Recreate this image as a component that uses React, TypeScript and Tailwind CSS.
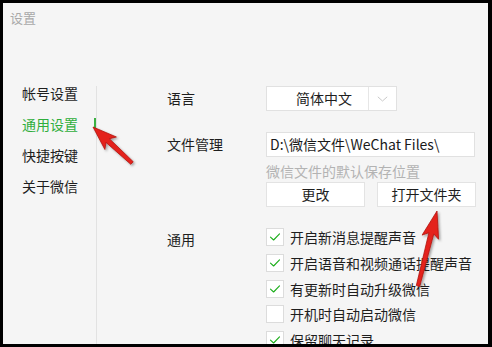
import React from "react";

type P = [number, number];

function arrowPoints(tip: P, tail: P, shaftTail: number, shaftHead: number, headLen: number, headW: number): string {
  const dx = tip[0] - tail[0];
  const dy = tip[1] - tail[1];
  const len = Math.hypot(dx, dy);
  const ux = dx / len;
  const uy = dy / len;
  const nx = -uy;
  const ny = ux;
  const base: P = [tip[0] - ux * headLen, tip[1] - uy * headLen];
  const join: P = [base[0] + ux * 4, base[1] + uy * 4];
  const pts: P[] = [
    [tail[0] + nx * shaftTail / 2, tail[1] + ny * shaftTail / 2],
    [join[0] + nx * shaftHead / 2, join[1] + ny * shaftHead / 2],
    [base[0] + nx * headW / 2, base[1] + ny * headW / 2],
    tip,
    [base[0] - nx * headW / 2, base[1] - ny * headW / 2],
    [join[0] - nx * shaftHead / 2, join[1] - ny * shaftHead / 2],
    [tail[0] - nx * shaftTail / 2, tail[1] - ny * shaftTail / 2],
  ];
  return pts.map((p) => `${p[0].toFixed(1)},${p[1].toFixed(1)}`).join(" ");
}

function Check() {
  return (
    <svg width="12" height="10" viewBox="0 0 12 10" fill="none">
      <path d="M1.5 5.2 L4.6 8 L10.5 1.8" stroke="#1aad19" strokeWidth="1.1" strokeLinecap="round" strokeLinejoin="round" />
    </svg>
  );
}

function CheckRow({ checked, label }: { checked: boolean; label: string }) {
  return (
    <div className="flex items-center h-[18px]">
      <div className="w-[18px] h-[18px] bg-white border border-[#dcdcdc] flex items-center justify-center">
        {checked ? <Check /> : null}
      </div>
      <span className="ml-[6px] text-[14px] leading-[18px] text-[#1e1e1e] whitespace-nowrap">{label}</span>
    </div>
  );
}

export default function App() {
  const a1 = arrowPoints([93, 127], [132, 163], 3.5, 5, 24, 17);
  const a2 = arrowPoints([437, 211], [418, 286], 3.5, 5, 27, 17);
  return (
    <div className="relative w-[492px] h-[347px] bg-black pt-[3px] pl-[3px] pr-[4px] pb-[3px] overflow-hidden font-['Noto_Sans_CJK_SC','Noto_Sans',sans-serif]">
      <div className="h-full bg-[#f5f5f5] flex flex-col overflow-hidden">
        <div className="pl-[7px] pt-[6px] h-[24px] text-[13px] leading-[18px] text-[#a9a9a9]">设置</div>
        <div className="mt-[56px] flex flex-1">
          <div className="w-[93px] pl-[19px] flex flex-col gap-[11px] text-[14px] leading-[20px] text-[#1e1e1e]">
            <div>帐号设置</div>
            <div className="relative text-[#2fae3c]">
              通用设置
              <div className="absolute right-0 top-[4px] w-[2px] h-[11px] bg-[#3cb043]" />
            </div>
            <div>快捷按键</div>
            <div>关于微信</div>
          </div>
          <div className="w-px bg-[#e2e2e2] mt-[3px]" />
          <div className="pl-[70px] flex flex-col text-[14px] text-[#1e1e1e]">
            <div className="mt-[3px] flex items-center h-[25px]">
              <div className="w-[99px]">语言</div>
              <div className="w-[131px] h-[25px] bg-white border border-[#e1e1e1] flex">
                <div className="w-[101px] pl-[29px] leading-[23px] whitespace-nowrap">简体中文</div>
                <div className="w-px bg-[#e6e6e6]" />
                <div className="flex-1 flex items-center justify-center">
                  <svg width="11" height="6" viewBox="0 0 11 6" fill="none">
                    <path d="M0.8 0.8 L5.5 5 L10.2 0.8" stroke="#c9c9c9" strokeWidth="1" />
                  </svg>
                </div>
              </div>
            </div>
            <div className="mt-[21px] flex items-center h-[25px]">
              <div className="w-[99px]">文件管理</div>
              <div className="w-[209px] h-[25px] bg-white border border-[#e1e1e1] pl-[3px] leading-[23px] whitespace-nowrap text-[#1a1a1a]">
                D:\微信文件\WeChat Files\
              </div>
            </div>
            <div className="mt-[4px] ml-[99px] leading-[20px] text-[#b3b3b3] whitespace-nowrap">微信文件的默认保存位置</div>
            <div className="mt-[1px] ml-[99px] flex gap-[12px]">
              <div className="w-[99px] h-[25px] bg-white border border-[#e3e3e3] flex items-center justify-center">更改</div>
              <div className="w-[99px] h-[25px] bg-white border border-[#e3e3e3] flex items-center justify-center">打开文件夹</div>
            </div>
            <div className="mt-[21px] flex">
              <div className="w-[99px] pt-[2px] leading-[18px]">通用</div>
              <div className="flex flex-col gap-[7.75px]">
                <CheckRow checked label="开启新消息提醒声音" />
                <CheckRow checked label="开启语音和视频通话提醒声音" />
                <CheckRow checked label="有更新时自动升级微信" />
                <CheckRow checked={false} label="开机时自动启动微信" />
                <CheckRow checked label="保留聊天记录" />
              </div>
            </div>
          </div>
        </div>
      </div>
      <svg className="absolute left-0 top-0 pointer-events-none" width="492" height="347" viewBox="0 0 492 347">
        <defs>
          <filter id="sh" x="-50%" y="-50%" width="200%" height="200%">
            <feDropShadow dx="1.5" dy="1.5" stdDeviation="1.2" floodColor="#000" floodOpacity="0.35" />
          </filter>
        </defs>
        <polygon points={a1} fill="#e4211c" stroke="#b01612" strokeWidth="0.8" strokeLinejoin="round" filter="url(#sh)" />
        <polygon points={a2} fill="#e4211c" stroke="#b01612" strokeWidth="0.8" strokeLinejoin="round" filter="url(#sh)" />
      </svg>
    </div>
  );
}
